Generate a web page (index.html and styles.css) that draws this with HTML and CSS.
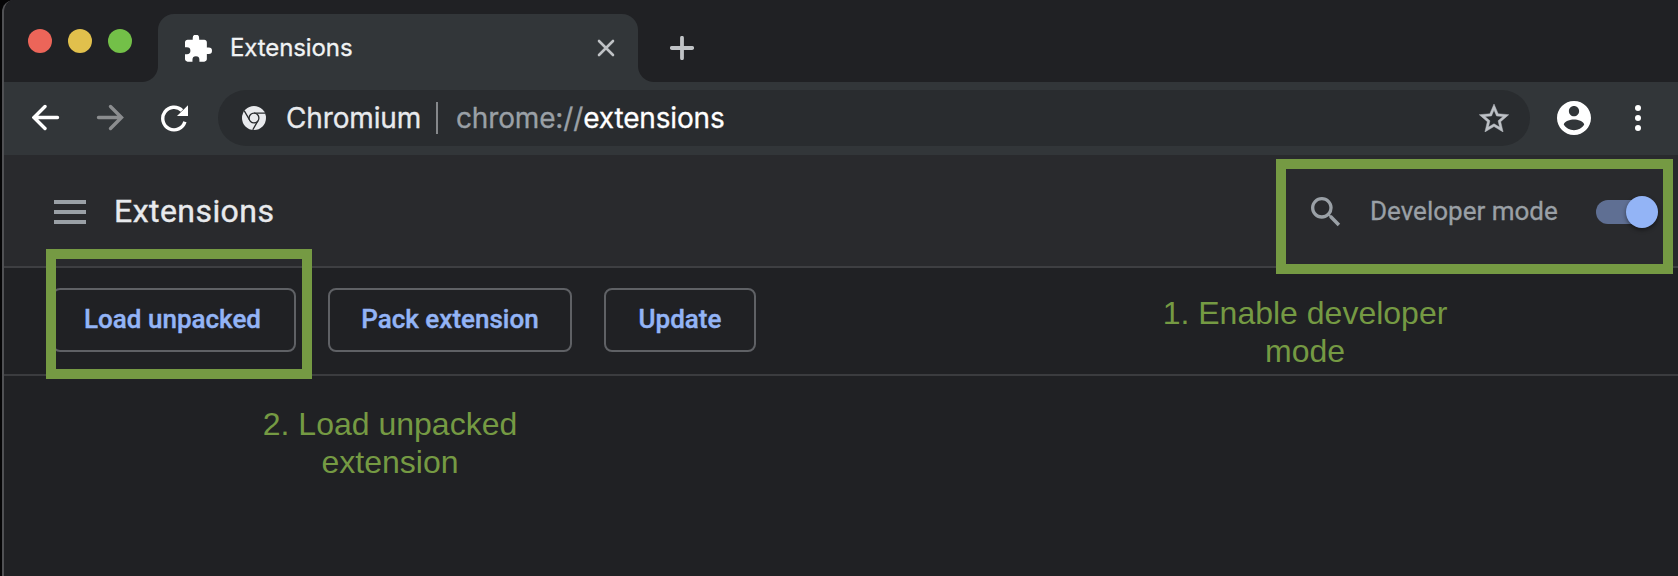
FILE: index.html
```html
<!DOCTYPE html>
<html lang="en">
<head>
<meta charset="utf-8">
<title>Extensions</title>
<link rel="stylesheet" href="styles.css">
</head>
<body>
<div class="window">
  <div class="tabstrip">
    <div class="lights"><i class="light red"></i><i class="light yellow"></i><i class="light green"></i></div>
    <div class="tab">
      <svg class="puzzle" viewBox="2 1.5 21 20.5"><path fill="#fff" d="M20.5 11H19V7c0-1.100-.9-2-2-2h-4V3.500a2.500 2.500 0 0 0-5 0V5H4c-1.100 0-2 .9-2 2v3.800h1.500a2.700 2.700 0 0 1 0 5.400H2V20c0 1.100.9 2 2 2h3.800v-1.500a2.700 2.700 0 0 1 5.400 0V22H17c1.100 0 2-.9 2-2v-4h1.500a2.500 2.500 0 0 0 0-5z"/></svg>
      <span class="tab-title">Extensions</span>
      <svg class="close" viewBox="0 0 18 18"><path d="M2 2l14 14M16 2L2 16" stroke="#bfc2c5" stroke-width="2.600" stroke-linecap="round"/></svg>
    </div>
    <svg class="plus" viewBox="0 0 24 24"><path d="M12 1.800v20.400M1.800 12h20.400" stroke="#c0c3c6" stroke-width="3.800" stroke-linecap="round"/></svg>
  </div>
  <div class="toolbar">
    <svg class="nav" viewBox="0 0 28 28"><path d="M25.500 13.500H2.200M13 2.500l-11 11 11 11" fill="none" stroke="#fff" stroke-width="3.400" stroke-linecap="round"/></svg>
    <svg class="nav" viewBox="0 0 28 28"><path d="M2.500 13.500h23M14.500 2.500l11 11-11 11" fill="none" stroke="#8b8d8f" stroke-width="3.400" stroke-linecap="round"/></svg>
    <svg class="nav" viewBox="0 0 28 28"><path d="M22 6.500A11.300 11.300 0 1 0 24.900 17.800" fill="none" stroke="#fff" stroke-width="3.400"/><path d="M28 1.300V12H17z" fill="#fff"/></svg>
    <div class="omnibox">
      <svg class="chromium" viewBox="0 0 24 24"><circle cx="12" cy="12" r="12" fill="#e8eaed"/><path d="M12 7.200h11M16.160 14.400l-5.400 9.400M7.840 14.400L2.300 4.900" stroke="#292c2f" stroke-width="1.300"/><circle cx="12" cy="12" r="4.900" fill="#e8eaed" stroke="#292c2f" stroke-width="1.300"/></svg>
      <span class="chip">Chromium</span>
      <span class="divider"></span>
      <span class="scheme">chrome://</span><span class="host">extensions</span>
      <svg class="star" viewBox="2 2 20 19"><path fill="#bdc1c6" stroke="#bdc1c6" stroke-width=".3" d="M22 9.240l-7.190-.62L12 2 9.190 8.630 2 9.240l5.460 4.730L5.820 21 12 17.270 18.180 21l-1.630-7.030L22 9.240zM12 15.400l-3.760 2.270 1-4.280-3.320-2.880 4.380-.38L12 6.100l1.710 4.040 4.380.38-3.320 2.880 1 4.280L12 15.400z"/></svg>
    </div>
    <svg class="avatar" viewBox="2 2 20 20"><path fill="#fff" d="M12 2C6.480 2 2 6.480 2 12s4.480 10 10 10 10-4.480 10-10S17.520 2 12 2zm0 3c1.660 0 3 1.340 3 3s-1.340 3-3 3-3-1.340-3-3 1.340-3 3-3zm0 14.200c-2.500 0-4.710-1.280-6-3.220.03-1.990 4-3.080 6-3.080 1.990 0 5.970 1.090 6 3.080-1.290 1.940-3.500 3.220-6 3.220z"/></svg>
    <svg class="more" viewBox="0 0 6 26"><g fill="#fff"><circle cx="3" cy="3" r="3"/><circle cx="3" cy="13" r="3"/><circle cx="3" cy="23" r="3"/></g></svg>
  </div>
  <header class="header">
    <div class="menu"><i></i><i></i><i></i></div>
    <h1 class="title">Extensions</h1>
    <svg class="search" viewBox="0 0 24 24"><path fill="#9aa0a6" d="M15.500 14h-.79l-.28-.27A6.470 6.470 0 0 0 16 9.500 6.500 6.500 0 1 0 9.500 16c1.610 0 3.090-.59 4.230-1.570l.27.28v.79l5 4.990L20.490 19l-4.990-5zm-6 0C7.010 14 5 11.990 5 9.500S7.010 5 9.500 5 14 7.010 14 9.500 11.990 14 9.500 14z"/></svg>
    <span class="dev-label">Developer mode</span>
    <div class="toggle"><i class="knob"></i></div>
  </header>
  <div class="drawer">
    <button class="btn load">Load unpacked</button>
    <button class="btn pack">Pack extension</button>
    <button class="btn update">Update</button>
  </div>
</div>
<div class="frame frame-dev"></div>
<div class="frame frame-load"></div>
<div class="note note-dev">1. Enable developer<br>mode</div>
<div class="note note-load">2. Load unpacked<br>extension</div>
</body>
</html>
```
FILE: styles.css
```css
* { box-sizing: border-box; }
body { margin: 0; width: 1678px; height: 576px; background: #050506; position: relative; overflow: hidden; font-family: Roboto, sans-serif; }
svg { display: block; flex: none; }
span { white-space: nowrap; }
.window { margin-left: 2px; height: 576px; border-left: 2px solid #505154; border-top-left-radius: 12px; background: #202124; overflow: hidden; }

.tabstrip { height: 82px; padding-top: 14px; display: flex; background: #202124; }
.lights { display: flex; gap: 16px; padding: 15px 0 0 24px; width: 154px; }
.light { width: 24px; height: 24px; border-radius: 50%; }
.red { background: #ec6559; }
.yellow { background: #e1c04c; }
.green { background: #73c048; }
.tab { position: relative; width: 480px; height: 68px; border-radius: 16px 16px 0 0; background: #323639; display: flex; align-items: center; padding: 0 23px 6px 27px; }
.tab::before, .tab::after { content: ""; position: absolute; bottom: 0; width: 16px; height: 16px; }
.tab::before { left: -16px; background: radial-gradient(circle at 0 0, #202124 15.5px, #323639 16.5px); }
.tab::after { right: -16px; background: radial-gradient(circle at 100% 0, #202124 15.5px, #323639 16.5px); }
.puzzle { width: 27px; height: 27px; margin-top: 6px; }
.tab-title { font: 24px/28px Inter, sans-serif; letter-spacing: -.1px; color: #f1f3f4; -webkit-text-stroke: .3px; margin: 5px 0 0 18px; flex: 1; }
.close { width: 18px; height: 18px; margin-top: 5px; }
.plus { width: 24px; height: 24px; margin: 22px 0 0 32px; }

.toolbar { height: 73px; background: #323639; display: flex; align-items: center; padding: 0 37px 1px 28px; }
.nav { width: 28px; height: 28px; margin-right: 36px; }
.omnibox { width: 1312px; height: 56px; border-radius: 28px; background: #292c2f; display: flex; align-items: center; padding: 0 21px 0 24px; margin-left: -6px; font: 28px/34px Inter, sans-serif; letter-spacing: -.15px; color: #e8eaed; -webkit-text-stroke: .3px; }
.chromium { width: 24px; height: 24px; }
.chip { margin-left: 20px; width: 150px; }
.divider { width: 2px; height: 32px; background: #85888b; margin-right: 18px; }
.scheme { color: #9aa0a6; }
.host { color: #fff; }
.star { width: 30px; height: 28px; margin-left: auto; }
.avatar { width: 34px; height: 34px; margin-left: 27px; }
.more { width: 6px; height: 26px; margin-left: auto; }

.header { height: 113px; border-bottom: 2px solid #3e3f42; background: #292a2d; display: flex; align-items: center; padding: 2px 20px 0 50px; }
.menu { display: flex; flex-direction: column; gap: 6px; width: 32px; }
.menu i { height: 4px; background: #9aa0a6; }
.title { margin: -2px 0 0 28px; font: 400 32px/38px Roboto, sans-serif; letter-spacing: .45px; color: #e8eaed; -webkit-text-stroke: .4px; }
.search { width: 40px; height: 40px; margin-left: auto; }
.dev-label { width: 226px; margin: -2px 0 0 24px; font-size: 26px; line-height: 32px; color: #9aa0a6; -webkit-text-stroke: .3px; }
.toggle { width: 62px; height: 24px; background: linear-gradient(#5f6f93, #5f6f93) 0 0 / 56px 24px no-repeat; border-radius: 12px; display: flex; align-items: center; justify-content: flex-end; }
.knob { width: 32px; height: 32px; border-radius: 50%; background: #93b4f6; box-shadow: 0 2px 4px rgba(0,0,0,.45); flex: none; }

.drawer { height: 108px; border-bottom: 2px solid #3b3c3f; display: flex; gap: 32px; padding: 20px 0 0 48px; }
.btn { height: 64px; border: 2px solid #5f6165; border-radius: 8px; background: none; padding: 0 0 2px; font: 500 26px/30px Roboto, sans-serif; color: #93b4f6; -webkit-text-stroke: .4px; }
.load, .pack { width: 244px; }
.load { padding-right: 3px; }
.update { width: 152px; }

.frame { position: absolute; border: 10px solid #759a43; }
.frame-dev { left: 1276px; top: 159px; width: 397px; height: 115px; }
.frame-load { left: 46px; top: 249px; width: 266px; height: 130px; }
.note { position: absolute; width: 320px; text-align: center; font: 32px/38px "Liberation Sans", sans-serif; color: #759a43; }
.note-dev { left: 1145px; top: 294px; }
.note-load { left: 230px; top: 405px; }
```
